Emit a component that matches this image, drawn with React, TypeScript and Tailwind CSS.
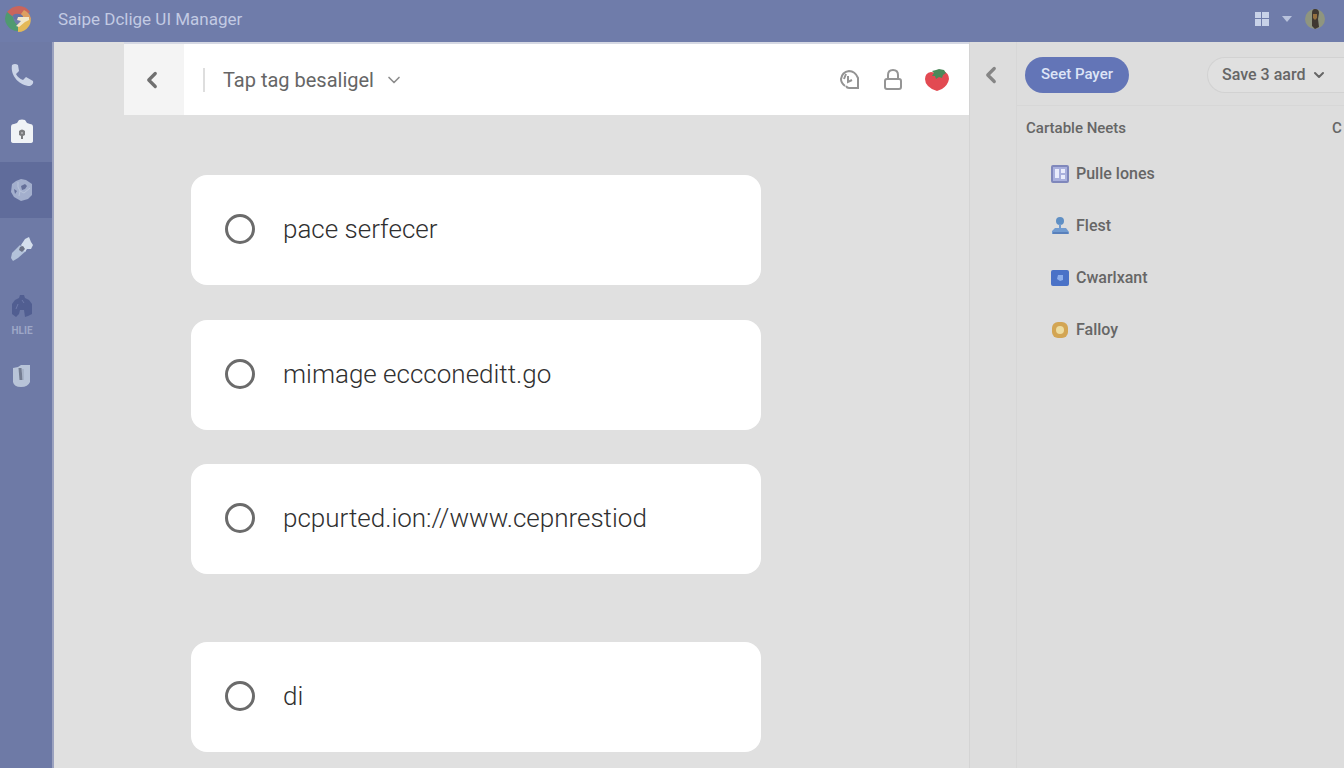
import { useState } from 'react';
import type { ReactNode } from 'react';
import { ChevronDown, ChevronLeft } from 'lucide-react';

const answers = [
  { id: 'pace', label: 'pace serfecer', gap: '' },
  { id: 'mimage', label: 'mimage eccconeditt.go', gap: 'mt-[35px]' },
  { id: 'link', label: 'pcpurted.ion://www.cepnrestiod', gap: 'mt-[34px]' },
  { id: 'di', label: 'di', gap: 'mt-[68px]' },
];

const LogoIcon = () => (
  <svg width="28" height="28" viewBox="0 0 28 28" aria-hidden="true">
    <path d="M3 7Q8 1 15 1Q22 1 26 7L20 11Q14 7 8 11Z" fill="#c9655c" />
    <path d="M3 7Q-1 14 3 20Q7 26 14 26L16 21Q10 19 9 12Z" fill="#4f9a70" />
    <path d="M14 27Q21 27 25 21Q28 16 26 12L20 14Q20 19 14 21Z" fill="#e3b958" />
    <path d="M20 5Q26 8 27 14L20 14L17 9Z" fill="#dd9e62" />
    <path d="M9 10Q14 7 19 11L19 14L14 15L10 14Z" fill="#6673a5" />
    <path d="M14 12H25V15L21 17L15 22L12 21L17 16L13 15Z" fill="#f1e7c9" />
  </svg>
);

const PhoneIcon = () => (
  <svg width="24" height="24" viewBox="0 0 24 24" fill="#cbd4e7" aria-hidden="true">
    <path d="M2 2Q5 0 8 2L9 8L6 11Q8 15 13 17L16 14L23 18Q24 21 20 23C10 23 0 13 2 2Z" />
  </svg>
);

const BagIcon = () => (
  <svg width="24" height="26" viewBox="0 0 24 26" aria-hidden="true">
    <path d="M1 8Q1 5 4 5L7 4L9 1Q12 0 15 1L17 4L20 5Q23 5 23 8V22Q23 24 20 24H4Q1 24 1 22Z" fill="#f0f3f6" />
    <path d="M9 12Q12 9 15 12V16L13 17V20H11V17L9 16Z" fill="#7c7e80" />
    <circle cx="12" cy="14" r="1" fill="#b8babd" />
  </svg>
);

const HexIcon = () => (
  <svg width="24" height="26" viewBox="0 0 24 26" aria-hidden="true">
    <path d="M11 2L16 3L22 7V18L18 22L11 24L4 20L1 15L2 7L6 4Z" fill="#a3afcd" />
    <path d="M11 9L15 7L17 9L15 12L12 13ZM4 12L7 14L5 17Z" fill="#65709a" />
    <path d="M8 5L8 10L10 14L14 16L20 11M10 14L9 19" fill="none" stroke="#b8c3da" strokeWidth="1" />
  </svg>
);

const BrushIcon = () => (
  <svg width="24" height="26" viewBox="0 0 24 26" aria-hidden="true">
    <path d="M2 17L10 9L16 15L8 22L3 25L1 22Z" fill="#b3c2da" />
    <path d="M11 9L15 3L19 1L21 6L23 9L21 13L17 13L15 16Z" fill="#d5dfec" />
    <path d="M10 11L13 10L15 13L12 16L9 14Z" fill="#6b7184" />
  </svg>
);

const HomeIcon = () => (
  <svg width="22" height="24" viewBox="0 0 22 24" aria-hidden="true">
    <path d="M1 10L4 6L8 4L9 1H13L14 4L18 6L21 10V20L17 22L14 23L13 16H9L8 20L5 23L1 20Z" fill="#515e91" />
    <path d="M11 6L13 9M7 10L5 15" stroke="#6d79a9" strokeWidth="1" />
  </svg>
);

const ClipIcon = () => (
  <svg width="22" height="24" viewBox="0 0 22 24" aria-hidden="true">
    <path d="M2 4L7 3L10 1H19V18Q17 23 10 23Q3 23 2 18Z" fill="#b8c4d8" />
    <path d="M9 4L10 16" stroke="#747d91" strokeWidth="3" />
    <path d="M12 5V16" stroke="#98a3b7" strokeWidth="1" />
  </svg>
);

const TomatoIcon = () => (
  <svg width="24" height="24" viewBox="0 0 24 24" aria-hidden="true">
    <path d="M0 11Q0 5 6 4L12 5L18 3Q24 5 24 11Q23 17 17 21L12 23Q7 22 3 18Q0 15 0 11Z" fill="#e24a52" />
    <path d="M7 3L11 2L14 1L19 2L21 5L18 7L17 10L14 9L11 11L10 8L7 8L9 5Z" fill="#4b8a5a" />
  </svg>
);

const ClockIcon = () => (
  <svg width="22" height="22" viewBox="0 0 22 22" fill="none" stroke="#939393" strokeWidth="2" aria-hidden="true">
    <path d="M6 17Q2 14 2 10Q3 3 10 2Q16 2 19 9V19H10Q8 19 7 17" />
    <path d="M7 5L5 10M9 7V13L13 11" />
  </svg>
);

const LockIcon = () => (
  <svg width="20" height="24" viewBox="0 0 20 24" fill="none" stroke="#959595" strokeWidth="2" aria-hidden="true">
    <path d="M5 11V7Q5 2 10 2Q15 2 15 7V11" />
    <rect x="2" y="11" width="16" height="10" rx="2" />
  </svg>
);

const GridIcon = () => (
  <svg width="16" height="16" viewBox="0 0 16 16" fill="#c8d2e8" aria-hidden="true">
    <path d="M1 1H7V7H1ZM8 1H15V7H8ZM1 8H7V15H1ZM8 8H15V15H8Z" />
  </svg>
);

const AvatarIcon = () => (
  <svg width="22" height="22" viewBox="0 0 22 22" aria-hidden="true">
    <circle cx="11" cy="11" r="10" fill="#8f957f" />
    <path d="M8 5Q8 1 11 1Q15 1 15 5L14 11L15 19L11 21L8 18V12Z" fill="#3f3831" />
    <path d="M9 6H13V10L11 12L9 10Z" fill="#94703f" />
  </svg>
);

const NotebookIcon = () => (
  <svg width="18" height="18" viewBox="0 0 18 18" aria-hidden="true">
    <rect x="1" y="1" width="16" height="16" rx="1" fill="#a9b0dd" stroke="#7f87bb" strokeWidth="2" />
    <path d="M4 4H8V13H4ZM10 4H14V8H10ZM10 10H14V14H10Z" fill="#e9ecfc" />
  </svg>
);

const PersonIcon = () => (
  <svg width="18" height="20" viewBox="0 0 18 20" aria-hidden="true">
    <circle cx="9" cy="5" r="4" fill="#5f8fc4" />
    <path d="M8 8H10V12H15L18 16V18H1V15L4 12H8Z" fill="#719bd0" />
    <path d="M2 17H17" stroke="#5980bb" strokeWidth="2" />
  </svg>
);

const CardIcon = () => (
  <svg width="18" height="18" viewBox="0 0 18 18" aria-hidden="true">
    <rect x="0" y="1" width="18" height="16" rx="2" fill="#4a72c7" />
    <path d="M7 6H12V11L9 12L6 10Z" fill="#8caeeb" />
  </svg>
);

const CoinIcon = () => (
  <svg width="18" height="18" viewBox="0 0 18 18" aria-hidden="true">
    <rect x="1" y="1" width="16" height="16" rx="6" fill="#d3a553" />
    <circle cx="9" cy="9" r="4" fill="#eddca0" />
  </svg>
);

const navItems: { name: string; icon: ReactNode; style: string; caption?: string }[] = [
  { name: 'Calls', icon: <PhoneIcon />, style: 'h-[58px]' },
  { name: 'Store', icon: <BagIcon />, style: 'h-[56px]' },
  { name: 'Objects', icon: <HexIcon />, style: 'h-[56px] mt-0.5 bg-[#606c9b]' },
  { name: 'Brush', icon: <BrushIcon />, style: 'h-[62px]' },
  { name: 'Home', icon: <HomeIcon />, style: 'h-[72px]', caption: 'HLIE' },
  { name: 'Files', icon: <ClipIcon />, style: 'h-[48px]' },
];

const links = [
  { label: 'Pulle lones', icon: <NotebookIcon /> },
  { label: 'Flest', icon: <PersonIcon /> },
  { label: 'Cwarlxant', icon: <CardIcon /> },
  { label: 'Falloy', icon: <CoinIcon /> },
];

const TopBar = () => (
  <header className="flex h-[42px] items-center bg-[#6f7caa] pb-1 pl-1 pr-[18px]">
    <LogoIcon />
    <h1 className="ml-[26px] pt-0.5 text-[17px] text-[#c2cae3]">Saipe Dclige UI Manager</h1>
    <div className="ml-auto flex items-center gap-3">
      <button aria-label="Apps"><GridIcon /></button>
      <button aria-label="More apps">
        <svg width="10" height="8" viewBox="0 0 10 8" fill="#b8c2dc"><path d="M0 1H10L5 7Z" /></svg>
      </button>
      <button aria-label="Account"><AvatarIcon /></button>
    </div>
  </header>
);

const Sidebar = () => (
  <nav className="w-[54px] shrink-0 border-r-2 border-[#9ba2bf] bg-[#6e7aa6] pt-1">
    {navItems.map((item) => (
      <button
        key={item.name}
        aria-label={item.name}
        className={`flex w-full flex-col items-center justify-center pr-2 ${item.style}`}
      >
        {item.icon}
        {item.caption && <span className="mt-1.5 text-[10px] leading-[14px] font-bold text-[#9da7c7]">{item.caption}</span>}
      </button>
    ))}
  </nav>
);

const Toolbar = () => (
  <div className="ml-[70px] flex h-[73px] items-center border-t-2 border-[#d5d8e3] bg-white pr-5">
    <button aria-label="Back" className="flex h-full w-[60px] items-center justify-center bg-[#f4f4f4] pr-1">
      <ChevronLeft size={26} strokeWidth={3} className="text-[#707070]" />
    </button>
    <button className="ml-[19px] flex items-center gap-[10px] text-[20px] text-[#666666]">
      <span className="mr-2 h-6 border-l-2 border-[#dedede]" />
      Tap tag besaligel
      <ChevronDown size={20} className="text-[#8c8c8c]" />
    </button>
    <div className="ml-auto flex items-center gap-[22px]">
      <button aria-label="History"><ClockIcon /></button>
      <button aria-label="Lock"><LockIcon /></button>
      <button aria-label="Timer"><TomatoIcon /></button>
    </div>
  </div>
);

const SidePanel = () => (
  <aside className="flex w-[375px] shrink-0 overflow-hidden border-l border-[#d4d4d4] bg-[#dddddd] text-[#666666]">
    <div className="w-[47px] shrink-0 border-r border-[#d7d7d7] pt-5">
      <button aria-label="Collapse panel" className="flex w-full justify-center pr-1">
        <ChevronLeft size={26} strokeWidth={3} className="text-[#858585]" />
      </button>
    </div>
    <div className="min-w-0 flex-1">
      <div className="flex h-[64px] items-center justify-between border-b border-[#d7d7d7] pt-0.5 pl-2">
        <button className="h-[36px] w-[104px] rounded-full bg-[#6375b7] text-[15px] font-medium text-[#dde4f6]">
          Seet Payer
        </button>
        <button className="flex h-[36px] w-[137px] items-center gap-1.5 rounded-l-full border border-r-0 border-[#d2d2d2] bg-[#e0e0e0] pl-[14px] text-[16px] font-medium whitespace-nowrap">
          Save 3 aard
          <ChevronDown size={16} strokeWidth={3} className="shrink-0" />
        </button>
      </div>
      <div className="flex items-center justify-between overflow-hidden pl-[9px] pt-3">
        <h2 className="text-[15px] leading-5 font-medium">Cartable Neets</h2>
        <h2 className="w-3 text-[15px] leading-5 font-medium">C</h2>
      </div>
      <ul className="pt-[10px] pl-[34px]">
        {links.map((link) => (
          <li key={link.label}>
            <a href="#" className="flex h-[52px] items-center gap-[7px] text-[16px] font-medium">
              {link.icon}
              {link.label}
            </a>
          </li>
        ))}
      </ul>
    </div>
  </aside>
);

export default function App() {
  const [selected, setSelected] = useState('');

  return (
    <div className="flex min-h-screen flex-col bg-[#e0e0e0] font-[Roboto,sans-serif]">
      <TopBar />
      <div className="flex flex-1">
        <Sidebar />
        <main className="min-w-0 flex-1">
          <Toolbar />
          <form className="ml-[137px] mr-8 max-w-[570px] pt-[60px] pb-4">
            {answers.map((answer) => (
              <label
                key={answer.id}
                className={`flex h-[110px] items-center gap-7 rounded-[16px] bg-white pb-0.5 pl-[34px] text-[26px] font-light text-[#303030] ${answer.gap}`}
              >
                <input
                  type="radio"
                  name="answer"
                  value={answer.id}
                  checked={selected === answer.id}
                  onChange={() => setSelected(answer.id)}
                  className="size-[30px] shrink-0 appearance-none rounded-full border-3 border-[#6b6b6b] checked:border-8"
                />
                {answer.label}
              </label>
            ))}
          </form>
        </main>
        <SidePanel />
      </div>
    </div>
  );
}
